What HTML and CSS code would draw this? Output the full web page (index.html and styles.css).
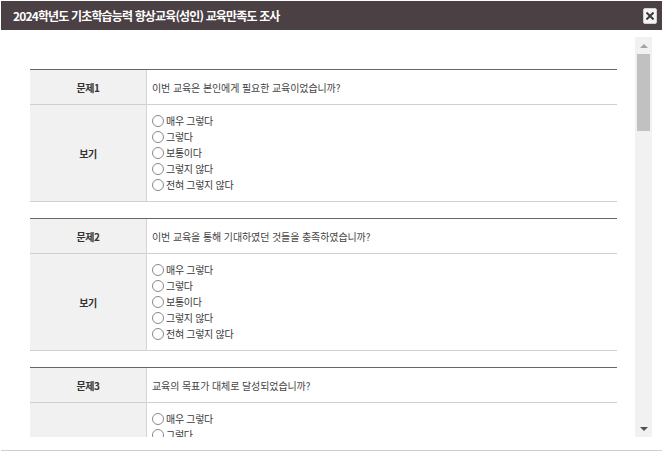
FILE: index.html
```html
<!DOCTYPE html>
<html lang="ko">
<head>
<meta charset="utf-8">
<title>교육만족도 조사</title>
<link rel="stylesheet" href="styles.css">
</head>
<body>
<div class="dialog">
  <div class="titlebar">
    <span class="title">2024학년도 기초학습능력 향상교육(성인) 교육만족도 조사</span>
    <button class="close" aria-label="닫기">
      <svg width="8" height="8" viewBox="0 0 8 8"><path d="M1.2 1.2 L6.8 6.8 M6.8 1.2 L1.2 6.8" stroke="#3a3a3a" stroke-width="2" stroke-linecap="square"/></svg>
    </button>
  </div>
  <div class="body">
    <div class="content">
      <div class="q">
        <div class="lab head">문제1</div>
        <div class="cell head">이번 교육은 본인에게 필요한 교육이었습니까?</div>
        <div class="lab opts">보기</div>
        <div class="cell opts">
          <div class="opt"><span class="radio"></span>매우 그렇다</div>
          <div class="opt"><span class="radio"></span>그렇다</div>
          <div class="opt"><span class="radio"></span>보통이다</div>
          <div class="opt"><span class="radio"></span>그렇지 않다</div>
          <div class="opt"><span class="radio"></span>전혀 그렇지 않다</div>
        </div>
      </div>
      <div class="q">
        <div class="lab head">문제2</div>
        <div class="cell head">이번 교육을 통해 기대하였던 것들을 충족하였습니까?</div>
        <div class="lab opts">보기</div>
        <div class="cell opts">
          <div class="opt"><span class="radio"></span>매우 그렇다</div>
          <div class="opt"><span class="radio"></span>그렇다</div>
          <div class="opt"><span class="radio"></span>보통이다</div>
          <div class="opt"><span class="radio"></span>그렇지 않다</div>
          <div class="opt"><span class="radio"></span>전혀 그렇지 않다</div>
        </div>
      </div>
      <div class="q">
        <div class="lab head">문제3</div>
        <div class="cell head">교육의 목표가 대체로 달성되었습니까?</div>
        <div class="lab opts">보기</div>
        <div class="cell opts">
          <div class="opt"><span class="radio"></span>매우 그렇다</div>
          <div class="opt"><span class="radio"></span>그렇다</div>
          <div class="opt"><span class="radio"></span>보통이다</div>
          <div class="opt"><span class="radio"></span>그렇지 않다</div>
          <div class="opt"><span class="radio"></span>전혀 그렇지 않다</div>
        </div>
      </div>
    </div>
    <div class="scrollbar">
      <div class="sb-btn"><span class="arrow-up"></span></div>
      <div class="thumb"></div>
      <div class="sb-track"></div>
      <div class="sb-btn"><span class="arrow-down"></span></div>
    </div>
  </div>
  <div class="footer"></div>
</div>
</body>
</html>
```

FILE: styles.css
```css
html, body {
  margin: 0;
  padding: 0;
  background: #fff;
}
body {
  font-family: "Noto Sans CJK KR", "Noto Sans", sans-serif;
  font-size: 10px;
  color: #444;
}
.dialog {
  width: 663px;
  height: 452px;
  box-sizing: border-box;
  padding: 1px 1px 0 1px;
  display: flex;
  flex-direction: column;
  overflow: hidden;
}
.titlebar {
  height: 29px;
  flex: none;
  background: #4b4043;
  display: flex;
  align-items: center;
  justify-content: space-between;
  padding: 0 5px 0 12px;
}
.title {
  color: #fff;
  font-weight: bold;
  font-size: 12px;
  letter-spacing: -0.85px;
}
.close {
  width: 14px;
  height: 16px;
  padding: 0;
  margin: 0;
  border: 1px solid #d0d0d0;
  border-radius: 2px;
  background: #f4f4f4;
  display: flex;
  align-items: center;
  justify-content: center;
  margin-top: 1px;
}
.body {
  flex: none;
  height: 400px;
  margin: 7px 10px 0 10px;
  display: flex;
}
.content {
  flex: 1;
  overflow: hidden;
  padding: 32px 18px 0 19px;
}
.q {
  display: grid;
  grid-template-columns: 117px 1fr;
  border-top: 1px solid #666;
  margin-bottom: 16px;
}
.lab {
  background: #f1f1f1;
  border-right: 1px solid #d5d5d5;
  border-bottom: 1px solid #d0d0d0;
  display: flex;
  align-items: center;
  justify-content: center;
  font-weight: bold;
  color: #333;
  letter-spacing: -0.4px;
}
.cell {
  border-bottom: 1px solid #d0d0d0;
  padding-left: 5px;
  letter-spacing: -0.3px;
}
.head {
  box-sizing: border-box;
  height: 35px;
}
.cell.head {
  display: flex;
  align-items: center;
  letter-spacing: -0.1px;
}
.opts {
  box-sizing: border-box;
  height: 97px;
}
.cell.opts {
  padding-top: 8px;
  color: #3a3a3a;
}
.opt {
  height: 16px;
  line-height: 16px;
  display: flex;
  align-items: center;
}
.radio {
  width: 10px;
  height: 10px;
  border: 1px solid #8a8a8a;
  border-radius: 50%;
  background: #fff;
  margin-right: 2px;
  flex: none;
}
.scrollbar {
  width: 17px;
  flex: none;
  background: #f1f1f1;
  display: flex;
  flex-direction: column;
}
.sb-btn {
  height: 17px;
  flex: none;
  display: flex;
  align-items: center;
  justify-content: center;
}
.arrow-up {
  width: 0;
  height: 0;
  border-left: 4px solid transparent;
  border-right: 4px solid transparent;
  border-bottom: 4px solid #a3a3a3;
}
.arrow-down {
  width: 0;
  height: 0;
  border-left: 4px solid transparent;
  border-right: 4px solid transparent;
  border-top: 4px solid #505050;
}
.thumb {
  height: 77px;
  margin: 0 2px;
  background: #c1c1c1;
  flex: none;
}
.sb-track {
  flex: 1;
}
.footer {
  margin-top: 13px;
  border-top: 1px solid #cfcfcf;
}
```
